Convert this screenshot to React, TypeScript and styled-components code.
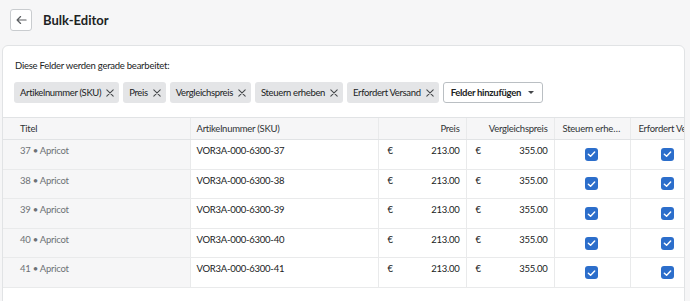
import React from "react";
import styled, { createGlobalStyle } from "styled-components";

const GlobalStyle = createGlobalStyle`
  html, body {
    margin: 0;
    padding: 0;
    background: #f6f6f7;
    font-family: Lato, "Open Sans", sans-serif;
    color: #202223;
  }
`;

const fields = [
  "Artikelnummer (SKU)",
  "Preis",
  "Vergleichspreis",
  "Steuern erheben",
  "Erfordert Versand",
];

const rows = [37, 38, 39, 40, 41];

const CloseIcon = () => (
  <svg width="8" height="8" viewBox="0 0 10 10">
    <path d="M1 1 L9 9 M9 1 L1 9" stroke="#44474a" strokeWidth="1.3" strokeLinecap="round" />
  </svg>
);

const ArrowLeft = () => (
  <svg width="11" height="10" viewBox="0 0 12 10">
    <path d="M11 5 H1.5 M5 1.2 L1.2 5 L5 8.8" stroke="#5c5f62" strokeWidth="1.3" fill="none" strokeLinecap="round" strokeLinejoin="round" />
  </svg>
);

const Check = () => (
  <CheckBox>
    <svg width="9" height="8" viewBox="0 0 10 8">
      <path d="M1.5 4.2 L4 6.5 L8.5 1.8" stroke="#fff" strokeWidth="1.6" fill="none" strokeLinecap="round" strokeLinejoin="round" />
    </svg>
  </CheckBox>
);

const App: React.FC = () => {
  return (
    <Page>
      <GlobalStyle />
      <TopBar>
        <BackButton>
          <ArrowLeft />
        </BackButton>
        <Title>Bulk-Editor</Title>
      </TopBar>
      <Card>
        <CardHeader>
          <Label>Diese Felder werden gerade bearbeitet:</Label>
          <Tags>
            {fields.map((f) => (
              <Tag key={f}>
                {f}
                <CloseIcon />
              </Tag>
            ))}
            <AddButton>
              Felder hinzufügen
              <Caret />
            </AddButton>
          </Tags>
        </CardHeader>
        <TableWrap>
          <Table>
            <colgroup>
              <col style={{ width: 187 }} />
              <col style={{ width: 188 }} />
              <col style={{ width: 88 }} />
              <col style={{ width: 88 }} />
              <col style={{ width: 76 }} />
              <col style={{ width: 76 }} />
            </colgroup>
            <thead>
              <tr>
                <Th>Titel</Th>
                <Th>Artikelnummer (SKU)</Th>
                <Th align="right">Preis</Th>
                <Th align="right">Vergleichspreis</Th>
                <Th>Steuern erheben</Th>
                <Th>Erfordert Versand</Th>
              </tr>
            </thead>
            <tbody>
              {rows.map((n) => (
                <tr key={n}>
                  <TitleCell>{n} • Apricot</TitleCell>
                  <Td>VOR3A-000-6300-{n}</Td>
                  <Td>
                    <Money>
                      <span>€</span>
                      <span>213.00</span>
                    </Money>
                  </Td>
                  <Td>
                    <Money>
                      <span>€</span>
                      <span>355.00</span>
                    </Money>
                  </Td>
                  <CheckCell>
                    <Check />
                  </CheckCell>
                  <CheckCell>
                    <Check />
                  </CheckCell>
                </tr>
              ))}
            </tbody>
          </Table>
        </TableWrap>
      </Card>
    </Page>
  );
};

export default App;

const Page = styled.div`
  padding: 9px 5px 0 2px;
  height: 292px;
  overflow: hidden;
`;

const TopBar = styled.div`
  display: flex;
  align-items: center;
  gap: 11px;
  padding-left: 8px;
  height: 22px;
  margin-bottom: 14px;
`;

const BackButton = styled.div`
  width: 20px;
  height: 20px;
  border: 1px solid #c9cccf;
  border-radius: 3px;
  background: #fff;
  display: flex;
  align-items: center;
  justify-content: center;
`;

const Title = styled.h1`
  margin: 0;
  font-size: 13px;
  font-weight: 700;
  color: #202223;
`;

const Card = styled.div`
  background: #fff;
  border: 1px solid #e1e3e5;
  border-radius: 6px 6px 0 0;
  overflow: hidden;
  height: 300px;
  font-size: 9.5px;
  letter-spacing: -0.25px;
`;

const CardHeader = styled.div`
  padding: 13px 12px 14px 11px;
  border-bottom: 1px solid #e1e3e5;
`;

const Label = styled.div`
  line-height: 14px;
  margin-left: 1px;
  margin-bottom: 9px;
`;

const Tags = styled.div`
  display: flex;
  flex-wrap: wrap;
  gap: 4px;
`;

const Tag = styled.div`
  display: flex;
  align-items: center;
  gap: 5px;
  height: 21px;
  padding: 0 5px 0 6px;
  background: #e4e5e7;
  border-radius: 3px;
  color: #202223;
  letter-spacing: -0.35px;
`;

const AddButton = styled.div`
  display: flex;
  align-items: center;
  gap: 7px;
  height: 19px;
  padding: 0 8px 0 7px;
  background: #fff;
  border: 1px solid #babfc3;
  border-radius: 3px;
  font-weight: 700;
  color: #202223;
  letter-spacing: -0.3px;
`;

const Caret = styled.span`
  width: 0;
  height: 0;
  border-left: 3px solid transparent;
  border-right: 3px solid transparent;
  border-top: 3.5px solid #44474a;
`;

const TableWrap = styled.div`
  overflow: hidden;
`;

const Table = styled.table`
  table-layout: fixed;
  border-collapse: collapse;
  width: 703px;
`;

const Th = styled.th<{ align?: string }>`
  height: 21px;
  padding: 0 6px 0 8px;
  background: #f6f6f7;
  border-right: 1px solid #e9eaeb;
  border-bottom: 1px solid #e1e3e5;
  text-align: ${({ align }) => align || "left"};
  font-weight: 400;
  color: #303336;
  white-space: nowrap;
  overflow: hidden;
  text-overflow: ellipsis;

  &:first-child {
    padding-left: 17px;
  }

  &:nth-child(2) {
    padding-left: 6px;
  }
`;

const Td = styled.td`
  height: 29.6px;
  box-sizing: border-box;
  padding: 5px 6px 0 9px;
  vertical-align: top;
  border-right: 1px solid #e9eaeb;
  border-bottom: 1px solid #e9eaeb;
  color: #202223;
  white-space: nowrap;

  &:nth-child(2) {
    padding-left: 6px;
  }
`;

const TitleCell = styled(Td)`
  padding-left: 17px;
  background: #f6f6f7;
  color: #6d7175;
`;

const CheckCell = styled(Td)`
  padding: 0 1px 0 0;
  vertical-align: middle;
  text-align: center;
`;

const Money = styled.div`
  display: flex;
  justify-content: space-between;
`;

const CheckBox = styled.span`
  display: inline-flex;
  align-items: center;
  justify-content: center;
  width: 13px;
  height: 13px;
  border-radius: 3px;
  background: #2c6ecb;
  vertical-align: middle;
`;
